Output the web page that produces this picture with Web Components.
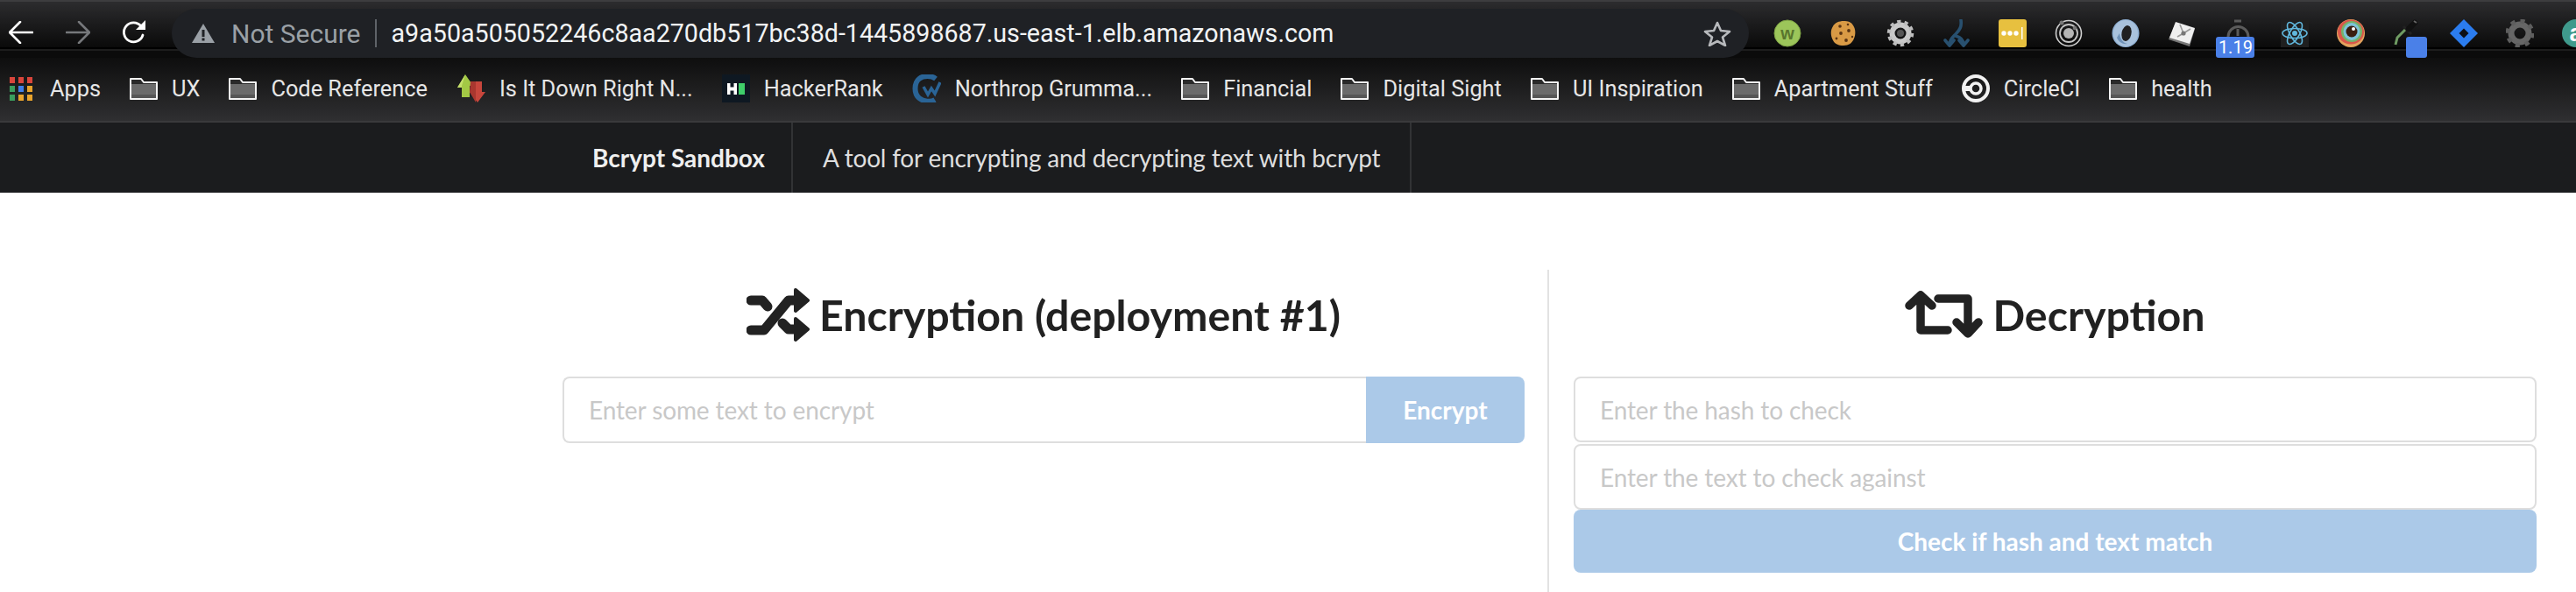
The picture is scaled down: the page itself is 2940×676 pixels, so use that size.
<!DOCTYPE html>
<html lang="en">
<head>
<meta charset="utf-8">
<title>Bcrypt Sandbox</title>
<style>
  html, body { margin: 0; background: #fff; overflow: hidden; }
</style>
</head>
<body>

<browser-toolbar url="a9a50a505052246c8aa270db517bc38d-1445898687.us-east-1.elb.amazonaws.com">
  <ext-icon><svg viewBox="0 0 32 32"><circle cx="16" cy="16" r="15" fill="#9cc55a"/><circle cx="16" cy="16" r="15" fill="none" stroke="#7da244" stroke-width="1"/><text x="16" y="23" text-anchor="middle" font-family="Liberation Sans" font-weight="700" font-size="20" fill="#59752d">w</text></svg></ext-icon>
  <ext-icon><svg viewBox="0 0 32 32"><path d="M16 2c5 0 9 1 11 5 3 4 3 11 1 15-2 5-6 8-12 8S6 28 4 24C1 19 1 12 4 8c2-4 7-6 12-6z" fill="#d99a45"/><g fill="#5a3413"><circle cx="12" cy="8" r="1.8"/><circle cx="21" cy="6" r="1.3"/><circle cx="22" cy="13" r="1.9"/><circle cx="13" cy="16" r="1.9"/><circle cx="8" cy="22" r="1.4"/><circle cx="19" cy="24" r="1.9"/><circle cx="26" cy="20" r="1.2"/></g></svg></ext-icon>
  <ext-icon><svg viewBox="0 0 32 32"><circle cx="16" cy="16" r="9.5" fill="none" stroke="#c9c9c9" stroke-width="6"/><circle cx="16" cy="16" r="13" fill="none" stroke="#bdbdbd" stroke-width="4.5" stroke-dasharray="4.1 4.07"/><circle cx="16" cy="16" r="4" fill="#555"/></svg></ext-icon>
  <ext-icon><svg viewBox="0 0 32 32" fill="none" stroke="#28506f" stroke-width="3.600" stroke-linecap="round" stroke-linejoin="round"><path d="M21 1c1 7-1 11-6 16-3 3-7 6-7 12"/><path d="M15 19c4 1 9 3 9 10"/><path d="M3 24l5 6 5-6M19 24l5 6 5-6"/></svg></ext-icon>
  <ext-icon><svg viewBox="0 0 32 32"><rect width="32" height="32" rx="3" fill="#e7c03f"/><g fill="#fff"><circle cx="6" cy="16" r="2.7"/><circle cx="13" cy="16" r="2.7"/><circle cx="20" cy="16" r="2.7"/><rect x="26" y="9" width="1.5" height="14"/></g></svg></ext-icon>
  <ext-icon><svg viewBox="0 0 32 32" fill="none"><circle cx="16" cy="16" r="14.5" stroke="#d0d0d0" stroke-width="1.6"/><circle cx="16" cy="16" r="10" stroke="#c4c4c4" stroke-width="1.8"/><circle cx="16" cy="16" r="6" fill="#b5b5b5"/><circle cx="8" cy="4" r="2.5" fill="#777"/><circle cx="23" cy="10" r="2.3" fill="#777"/></svg></ext-icon>
  <ext-icon><svg viewBox="0 0 32 32"><ellipse cx="16" cy="16" rx="15.5" ry="16" fill="#8fb0d3"/><ellipse cx="16" cy="16" rx="14" ry="15" fill="#a9c2dc"/><ellipse cx="17" cy="16" rx="5.5" ry="9" fill="#202020" transform="rotate(12 17 16)"/><path d="M6 21c2 5 7 8 12 7-5-1-8-5-9-12z" fill="#6f92b8"/></svg></ext-icon>
  <ext-icon><svg viewBox="0 0 32 32"><path d="M9 4l22 7-6 20L1 23z" fill="#777"/><path d="M9 3l22 7-6 18L2 21z" fill="#efefef"/><path d="M14 6l4 10 8-5M18 16l-7 4" stroke="#999" stroke-width="1.6" fill="none"/><circle cx="18" cy="16" r="2.6" fill="#777"/></svg></ext-icon>
  <ext-icon badge="1.19"><svg viewBox="0 0 32 32" fill="none" stroke="#5b5b5b" stroke-width="3"><path d="M5 20a11.500 11.500 0 0 1 23 0" /><path d="M12 2h8M16 11v8"/></svg></ext-icon>
  <ext-icon><svg viewBox="0 0 32 32"><rect width="32" height="32" fill="#1f1f1f"/><g fill="none" stroke="#61b8de" stroke-width="1.600"><ellipse cx="16" cy="16" rx="14" ry="5.500"/><ellipse cx="16" cy="16" rx="14" ry="5.500" transform="rotate(60 16 16)"/><ellipse cx="16" cy="16" rx="14" ry="5.500" transform="rotate(120 16 16)"/></g><circle cx="16" cy="16" r="3" fill="#61b8de"/></svg></ext-icon>
  <ext-icon><svg viewBox="0 0 32 32"><ellipse cx="16" cy="16" rx="16" ry="16" fill="#e2a35d"/><ellipse cx="16" cy="14.500" rx="15" ry="14" fill="#d9574a"/><ellipse cx="17" cy="14" rx="12" ry="12" fill="#76b26a"/><ellipse cx="17" cy="14" rx="9.500" ry="10" fill="#7dc3d9"/><circle cx="17" cy="14" r="6.500" fill="#3a1d10"/><circle cx="19" cy="11" r="2" fill="#fff"/></svg></ext-icon>
  <ext-icon badge=" " badge-offset="15"><svg viewBox="0 0 32 32" fill="none"><path d="M3 29l2-8 10-10" stroke="#6f9c63" stroke-width="3"/><path d="M12 8l9 9" stroke="#222" stroke-width="3"/><path d="M18 11l7-7" stroke="#111" stroke-width="6.500" stroke-linecap="round"/><path d="M24 2l3 2" stroke="#666" stroke-width="2"/></svg></ext-icon>
  <ext-icon><svg viewBox="0 0 32 32"><path d="M16 0l16 16-16 16L0 16z" fill="#2b7cee"/><path d="M16 10.500l5.500 5.500-5.500 5.500-5.500-5.500z" fill="#0d0f14"/></svg></ext-icon>
  <ext-icon><svg viewBox="0 0 32 32"><circle cx="16" cy="16" r="10" fill="none" stroke="#666" stroke-width="7"/><circle cx="16" cy="16" r="14" fill="none" stroke="#5e5e5e" stroke-width="5" stroke-dasharray="5 6"/></svg></ext-icon>
  <ext-icon><svg viewBox="0 0 32 32"><circle cx="16" cy="16" r="16" fill="#3f9a8c"/><text x="16" y="25" text-anchor="middle" font-family="Liberation Sans" font-weight="700" font-size="27" fill="#fff">a</text></svg></ext-icon>
</browser-toolbar>

<bookmarks-bar>
  <bookmark-item label="Apps" style="gap:20px"><svg viewBox="0 0 26 27" width="26" height="27"><g fill="#d9453b"><rect width="6" height="7"/><rect x="10" width="6" height="7"/><rect x="20" width="6" height="7"/></g><rect y="10" width="6" height="7" fill="#3a9d5d"/><rect x="10" y="10" width="6" height="7" fill="#3f7ee8"/><rect x="20" y="10" width="6" height="7" fill="#e9a32c"/><rect y="20" width="6" height="7" fill="#3a9d5d"/><rect x="10" y="20" width="6" height="7" fill="#e9a32c"/><rect x="20" y="20" width="6" height="7" fill="#e9a32c"/></svg></bookmark-item>
  <bookmark-item label="UX" folder></bookmark-item>
  <bookmark-item label="Code Reference" folder></bookmark-item>
  <bookmark-item label="Is It Down Right N..."><svg viewBox="0 0 33 32" width="33" height="32"><path d="M10 0l9 13h-4v13H6V15H1z" fill="#a3c945"/><path d="M10 0l-9 15h5v-2z" fill="#c5df6c"/><path d="M16 8h13v12h4l-9 12-9-12h1z" fill="#c7463c"/><path d="M16 8h6v24l-7-12z" fill="#a9372f"/></svg></bookmark-item>
  <bookmark-item label="HackerRank"><svg viewBox="0 0 32 32" width="32" height="32"><rect width="32" height="32" fill="#0e1822"/><rect x="6" y="10" width="11" height="13" fill="#fff"/><rect x="9.500" y="10" width="4" height="4.500" fill="#0e1822"/><rect x="9.500" y="18.500" width="4" height="4.500" fill="#0e1822"/><rect x="19" y="10" width="7" height="13" fill="#3fce6a"/></svg></bookmark-item>
  <bookmark-item label="Northrop Grumma..."><svg viewBox="0 0 33 32" width="33" height="32" fill="none" stroke="#2a6496"><path d="M27 5C22 1 13 1 8 5 2 10 2 22 8 27c5 4 13 5 18 2" stroke-width="6"/><path d="M13 14l5 9 4-7 4 6 6-13" stroke-width="3.500"/></svg></bookmark-item>
  <bookmark-item label="Financial" folder></bookmark-item>
  <bookmark-item label="Digital Sight" folder></bookmark-item>
  <bookmark-item label="UI Inspiration" folder></bookmark-item>
  <bookmark-item label="Apartment Stuff" folder></bookmark-item>
  <bookmark-item label="CircleCI"><svg viewBox="0 0 32 32" width="32" height="32"><circle cx="16" cy="16" r="14" fill="none" stroke="#f2f2f2" stroke-width="4"/><circle cx="16" cy="16" r="6" fill="none" stroke="#f2f2f2" stroke-width="3.500"/><path d="M1 13h9v6H1z" fill="#f2f2f2"/></svg></bookmark-item>
  <bookmark-item label="health" folder></bookmark-item>
</bookmarks-bar>

<app-nav>
  <nav-link brand>Bcrypt Sandbox</nav-link>
  <nav-link>A tool for encrypting and decrypting text with bcrypt</nav-link>
</app-nav>

<sandbox-page>
  <crypt-panel slot="left">
    <svg slot="icon" viewBox="0 0 72 63" width="72" height="63" fill="#222" stroke="#222" stroke-linecap="round" stroke-linejoin="round">
      <path d="M5 49h15L48 15h10M5 15h13l6 7M41 41l7 7h10" fill="none" stroke-width="11"/>
      <path d="M56 3l14 12-14 12zM56 36l14 12-14 12z" stroke-width="4"/>
    </svg>
    <span slot="title">Encryption (deployment #1)</span>
    <text-field placeholder="Enter some text to encrypt" joined-button="Encrypt"></text-field>
  </crypt-panel>
  <crypt-panel slot="right">
    <svg slot="icon" viewBox="0 0 89 54" width="89" height="54" fill="none" stroke="#222" stroke-width="9.500" stroke-linecap="round" stroke-linejoin="round">
      <path d="M5 17L18 5l13 12M18 6v39h31M38 9h34v38M59 36l13 13 12-13"/>
    </svg>
    <span slot="title">Decryption</span>
    <text-field placeholder="Enter the hash to check"></text-field>
    <text-field placeholder="Enter the text to check against"></text-field>
    <action-button>Check if hash and text match</action-button>
  </crypt-panel>
</sandbox-page>

<script>
const chromeFont = 'Roboto, "Liberation Sans", sans-serif';
const appFont = 'Lato, "Liberation Sans", sans-serif';

class BrowserToolbar extends HTMLElement {
  constructor() {
    super();
    const url = this.getAttribute('url');
    this.attachShadow({ mode: 'open' }).innerHTML = `
      <style>
        :host {
          display: flex;
          height: 66px;
          box-sizing: border-box;
          padding-top: 10px;
          overflow: hidden;
          font-family: ${chromeFont};
          background:
            linear-gradient(#3d3d3f 0 2px, transparent 2px),
            linear-gradient(#000 0 0) 0 54px / 100% 2px no-repeat,
            linear-gradient(#1d1d1d 0 0) 0 56px / 100% 2px no-repeat,
            linear-gradient(#0b0b0b 0 0) 0 58px / 100% 8px no-repeat,
            linear-gradient(#2c2c2e 2px, #0a0a0a 54px);
        }
        .nav { display: flex; align-items: flex-start; width: 196px; flex: none; }
        .nav svg { flex: none; margin-top: 14px; }
        .bar {
          display: flex;
          align-items: center;
          flex: none;
          width: 1800px;
          height: 56px;
          box-sizing: border-box;
          padding: 0 20px 0 23px;
          background: #1f2125;
          border-radius: 28px;
          font-size: 28.650px;
        }
        .warn { color: #9aa0a6; margin-left: 19px; white-space: nowrap; font-size: 30px; }
        .sep { width: 2px; height: 32px; background: #5f6368; margin: 0 17px 0 16px; }
        .url { color: #f1f3f4; white-space: nowrap; flex: 1; }
        .exts { display: flex; gap: 32.300px; margin-left: 28px; flex: none; padding-top: 12px; }
      </style>
      <div class="nav">
        <svg style="margin-left:10px" width="28" height="26" viewBox="0 0 28 26" fill="none" stroke="#fff" stroke-width="2.600" stroke-linecap="round" stroke-linejoin="round"><path d="M27 13H2M13 1L1 13l12 12"/></svg>
        <svg style="margin-left:37px" width="28" height="26" viewBox="0 0 28 26" fill="none" stroke="#76787b" stroke-width="2.600" stroke-linecap="round" stroke-linejoin="round"><path d="M1 13h25M15 1l12 12-12 12"/></svg>
        <svg style="margin-left:36px;margin-top:13px" width="28" height="28" viewBox="0 0 28 28" fill="none"><path d="M24 17a11 11 0 1 1-2-10" stroke="#fff" stroke-width="2.800" stroke-linecap="round"/><path d="M27 0v11H16z" fill="#fff"/></svg>
      </div>
      <div class="bar">
        <svg width="26" height="22" viewBox="0 0 26 22"><path d="M13 0l13 22H0z" fill="#9aa0a6"/><rect x="11.500" y="7" width="3" height="8" fill="#1f2125"/><rect x="11.500" y="16.500" width="3" height="3" fill="#1f2125"/></svg>
        <span class="warn">Not Secure</span>
        <span class="sep"></span>
        <span class="url">${url}</span>
        <svg width="32" height="30" viewBox="0 0 32 30" fill="none" stroke="#b7b9bc" stroke-width="2.600" stroke-linejoin="round"><path d="M16 3l4 9 10 1-8 6.500 3 9.500-9-5-9 5 3-9.500L2 13l10-1z"/></svg>
      </div>
      <div class="exts"><slot></slot></div>`;
  }
}

class ExtIcon extends HTMLElement {
  constructor() {
    super();
    const badge = this.getAttribute('badge');
    const offset = this.getAttribute('badge-offset') || -9;
    const empty = badge !== null && !badge.trim();
    this.attachShadow({ mode: 'open' }).innerHTML = `
      <style>
        :host { display: block; position: relative; width: 32px; height: 32px; flex: none; }
        ::slotted(svg) { display: block; width: 32px; height: 32px; }
        .badge {
          position: absolute;
          left: ${offset}px;
          top: 20px;
          height: 24px;
          width: ${empty ? 24 : 44}px;
          border-radius: 3px;
          background: #4a80e8;
          color: #fff;
          font-size: 20px;
          line-height: 24px;
          text-align: center;
        }
      </style>
      <slot></slot>
      ${badge !== null ? `<div class="badge">${badge}</div>` : ''}`;
  }
}

class BookmarksBar extends HTMLElement {
  constructor() {
    super();
    this.attachShadow({ mode: 'open' }).innerHTML = `
      <style>
        :host {
          display: flex;
          align-items: center;
          gap: 33px;
          height: 74px;
          box-sizing: border-box;
          padding: 0 0 2px 11px;
          font-family: ${chromeFont};
          background: linear-gradient(#0e0e0e, #2f2f31);
          border-bottom: 2px solid #3a3a3c;
        }
      </style>
      <slot></slot>`;
  }
}

class BookmarkItem extends HTMLElement {
  constructor() {
    super();
    const folder = this.hasAttribute('folder');
    this.attachShadow({ mode: 'open' }).innerHTML = `
      <style>
        :host { display: flex; align-items: center; gap: 16px; flex: none; }
        span { color: #e6e6e6; font-size: 25.350px; white-space: nowrap; }
        svg { display: block; }
      </style>
      ${folder ? `<svg width="32" height="25" viewBox="0 0 32 25">
        <path d="M1 1h12l3 4h15v19H1z" fill="#2a2a2a" stroke="#f4f4f4" stroke-width="2" stroke-linejoin="round"/>
        <rect x="2" y="7" width="28" height="16" fill="#6b6b6b"/>
        <rect x="2" y="19" width="28" height="4" fill="#565656"/>
      </svg>` : '<slot></slot>'}
      <span>${this.getAttribute('label')}</span>`;
  }
}

class AppNav extends HTMLElement {
  constructor() {
    super();
    this.attachShadow({ mode: 'open' }).innerHTML = `
      <style>
        :host {
          display: flex;
          height: 80px;
          padding-left: 642px;
          background: #1b1c1e;
          font-family: ${appFont};
        }
      </style>
      <slot></slot>`;
  }
}

class NavLink extends HTMLElement {
  constructor() {
    super();
    this.attachShadow({ mode: 'open' }).innerHTML = `
      <style>
        :host {
          display: flex;
          align-items: center;
          padding: 0 34px;
          border-right: 2px solid #323335;
          color: #dedede;
          font-size: 28px;
          letter-spacing: -0.2px;
          white-space: nowrap;
        }
        :host([brand]) { color: #efefef; font-weight: 700; letter-spacing: 0; padding-right: 30px; }
      </style>
      <slot></slot>`;
  }
}

class SandboxPage extends HTMLElement {
  constructor() {
    super();
    this.attachShadow({ mode: 'open' }).innerHTML = `
      <style>
        :host {
          display: grid;
          grid-template-columns: 1126px 1172px;
          margin: 88px 0 0 642px;
          font-family: ${appFont};
        }
        .left { padding-right: 26px; border-right: 2px solid #e2e2e2; }
        .right { padding: 0 45px 0 28px; }
        .left, .right { height: 368px; box-sizing: border-box; }
      </style>
      <div class="left"><slot name="left"></slot></div>
      <div class="right"><slot name="right"></slot></div>`;
  }
}

class CryptPanel extends HTMLElement {
  constructor() {
    super();
    this.attachShadow({ mode: 'open' }).innerHTML = `
      <style>
        :host { display: block; }
        h2 {
          display: flex;
          align-items: center;
          justify-content: center;
          gap: 11px;
          height: 102px;
          margin: 0 0 20px;
          color: #212121;
          font-size: 48.300px;
          font-weight: 700;
          white-space: nowrap;
        }
        .fields { display: flex; flex-direction: column; gap: 2px; }
      </style>
      <h2><slot name="icon"></slot><slot name="title"></slot></h2>
      <div class="fields"><slot></slot></div>`;
  }
}

class TextField extends HTMLElement {
  constructor() {
    super();
    const label = this.getAttribute('joined-button');
    this.attachShadow({ mode: 'open' }).innerHTML = `
      <style>
        :host { display: flex; height: 75px; font-family: inherit; }
        input {
          flex: 1;
          min-width: 0;
          box-sizing: border-box;
          height: 100%;
          padding: 0 28px;
          border: 2px solid #dedede;
          border-radius: 8px;
          font: 28px ${appFont};
          letter-spacing: -0.1px;
          outline: none;
          background: #fff;
        }
        input::placeholder { color: #c8c8c8; opacity: 1; }
        :host([joined-button]) { height: 76px; }
        :host([joined-button]) input { border-radius: 8px 0 0 8px; border-right: 0; }
        .join {
          width: 181px;
          border-radius: 0 8px 8px 0;
          background: #abc9e8;
          color: #fff;
          font-size: 28px;
          font-weight: 700;
          display: flex;
          align-items: center;
          justify-content: center;
        }
      </style>
      <input type="text" placeholder="${this.getAttribute('placeholder')}">
      ${label ? `<div class="join">${label}</div>` : ''}`;
  }
}

class ActionButton extends HTMLElement {
  constructor() {
    super();
    this.attachShadow({ mode: 'open' }).innerHTML = `
      <style>
        :host {
          display: flex;
          align-items: center;
          justify-content: center;
          height: 72px;
          margin-top: -2px;
          border-radius: 8px;
          background: #abc9e8;
          color: #fff;
          font-size: 28px;
          font-weight: 700;
        }
      </style>
      <slot></slot>`;
  }
}

customElements.define('browser-toolbar', BrowserToolbar);
customElements.define('ext-icon', ExtIcon);
customElements.define('bookmarks-bar', BookmarksBar);
customElements.define('bookmark-item', BookmarkItem);
customElements.define('app-nav', AppNav);
customElements.define('nav-link', NavLink);
customElements.define('sandbox-page', SandboxPage);
customElements.define('crypt-panel', CryptPanel);
customElements.define('text-field', TextField);
customElements.define('action-button', ActionButton);
</script>
</body>
</html>
